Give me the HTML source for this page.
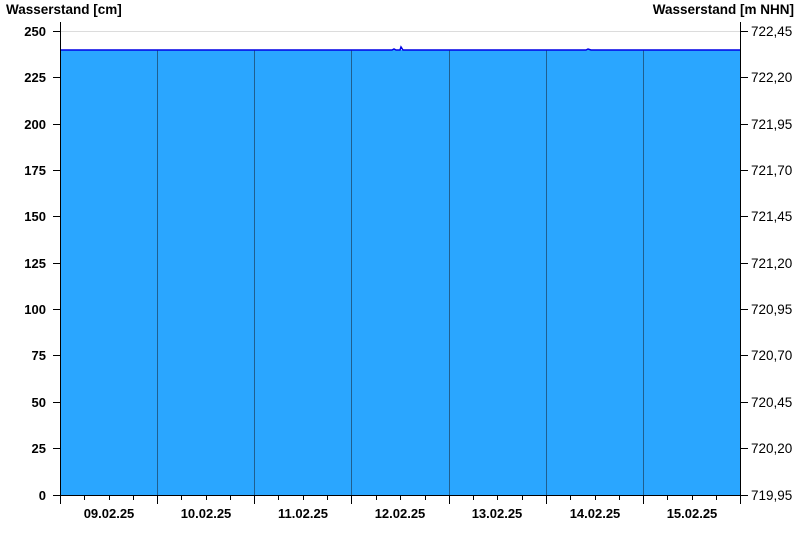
<!DOCTYPE html>
<html><head><style>body{margin:0;background:#fff}svg{display:block}</style></head><body>
<svg width="800" height="550" xmlns="http://www.w3.org/2000/svg" font-family="Liberation Sans, Arial, sans-serif" font-size="13">
<rect width="800" height="550" fill="#fff"/>
<line x1="60" y1="31.5" x2="740" y2="31.5" stroke="#dcdcdc"/>
<rect x="60" y="50" width="680" height="445" fill="#2aa6ff"/>
<g stroke="#1f5f8f" stroke-width="1">
<line x1="157.5" y1="50" x2="157.5" y2="495"/><line x1="254.5" y1="50" x2="254.5" y2="495"/><line x1="351.5" y1="50" x2="351.5" y2="495"/><line x1="449.5" y1="50" x2="449.5" y2="495"/><line x1="546.5" y1="50" x2="546.5" y2="495"/><line x1="643.5" y1="50" x2="643.5" y2="495"/>
</g>
<polyline points="60,50 392,50 394,49 396,50 400,50 401,47 403,50 586,50 588,49 591,50 740,50" fill="none" stroke="#0000e6" stroke-width="1.5"/>
<g stroke="#000" stroke-width="1">
<line x1="60.5" y1="22" x2="60.5" y2="495"/>
<line x1="740.5" y1="22" x2="740.5" y2="495"/>
<line x1="60" y1="495.5" x2="741" y2="495.5"/>
<line x1="53" y1="31.5" x2="60" y2="31.5"/><line x1="53" y1="77.5" x2="60" y2="77.5"/><line x1="53" y1="124.5" x2="60" y2="124.5"/><line x1="53" y1="170.5" x2="60" y2="170.5"/><line x1="53" y1="216.5" x2="60" y2="216.5"/><line x1="53" y1="263.5" x2="60" y2="263.5"/><line x1="53" y1="309.5" x2="60" y2="309.5"/><line x1="53" y1="355.5" x2="60" y2="355.5"/><line x1="53" y1="402.5" x2="60" y2="402.5"/><line x1="53" y1="448.5" x2="60" y2="448.5"/><line x1="53" y1="495.5" x2="60" y2="495.5"/>
<line x1="741" y1="31.5" x2="748" y2="31.5"/><line x1="741" y1="77.5" x2="748" y2="77.5"/><line x1="741" y1="124.5" x2="748" y2="124.5"/><line x1="741" y1="170.5" x2="748" y2="170.5"/><line x1="741" y1="216.5" x2="748" y2="216.5"/><line x1="741" y1="263.5" x2="748" y2="263.5"/><line x1="741" y1="309.5" x2="748" y2="309.5"/><line x1="741" y1="355.5" x2="748" y2="355.5"/><line x1="741" y1="402.5" x2="748" y2="402.5"/><line x1="741" y1="448.5" x2="748" y2="448.5"/><line x1="741" y1="495.5" x2="748" y2="495.5"/>
<line x1="60.5" y1="495" x2="60.5" y2="504"/><line x1="157.5" y1="495" x2="157.5" y2="504"/><line x1="254.5" y1="495" x2="254.5" y2="504"/><line x1="351.5" y1="495" x2="351.5" y2="504"/><line x1="449.5" y1="495" x2="449.5" y2="504"/><line x1="546.5" y1="495" x2="546.5" y2="504"/><line x1="643.5" y1="495" x2="643.5" y2="504"/><line x1="740.5" y1="495" x2="740.5" y2="504"/>
<line x1="84.5" y1="495" x2="84.5" y2="500"/><line x1="109.5" y1="495" x2="109.5" y2="500"/><line x1="133.5" y1="495" x2="133.5" y2="500"/>
<line x1="181.5" y1="495" x2="181.5" y2="500"/><line x1="206.5" y1="495" x2="206.5" y2="500"/><line x1="230.5" y1="495" x2="230.5" y2="500"/>
<line x1="278.5" y1="495" x2="278.5" y2="500"/><line x1="303.5" y1="495" x2="303.5" y2="500"/><line x1="327.5" y1="495" x2="327.5" y2="500"/>
<line x1="376.5" y1="495" x2="376.5" y2="500"/><line x1="400.5" y1="495" x2="400.5" y2="500"/><line x1="425.5" y1="495" x2="425.5" y2="500"/>
<line x1="473.5" y1="495" x2="473.5" y2="500"/><line x1="497.5" y1="495" x2="497.5" y2="500"/><line x1="522.5" y1="495" x2="522.5" y2="500"/>
<line x1="570.5" y1="495" x2="570.5" y2="500"/><line x1="595.5" y1="495" x2="595.5" y2="500"/><line x1="619.5" y1="495" x2="619.5" y2="500"/>
<line x1="667.5" y1="495" x2="667.5" y2="500"/><line x1="692.5" y1="495" x2="692.5" y2="500"/><line x1="716.5" y1="495" x2="716.5" y2="500"/>
</g>
<g font-weight="bold" fill="#000">
<text x="6" y="14" font-size="13.5">Wasserstand [cm]</text>
<text x="794" y="14" text-anchor="end" font-size="13.5">Wasserstand [m NHN]</text>
<g text-anchor="end">
<text x="46" y="36">250</text><text x="46" y="82">225</text><text x="46" y="129">200</text><text x="46" y="175">175</text><text x="46" y="221">150</text><text x="46" y="268">125</text><text x="46" y="314">100</text><text x="46" y="360">75</text><text x="46" y="407">50</text><text x="46" y="453">25</text><text x="46" y="500">0</text>
</g>
<g text-anchor="middle">
<text x="109" y="518">09.02.25</text><text x="206" y="518">10.02.25</text><text x="303" y="518">11.02.25</text><text x="400" y="518">12.02.25</text><text x="497" y="518">13.02.25</text><text x="595" y="518">14.02.25</text><text x="692" y="518">15.02.25</text>
</g>
</g>
<g fill="#000" font-size="13.5">
<text x="751" y="36">722,45</text><text x="751" y="82">722,20</text><text x="751" y="129">721,95</text><text x="751" y="175">721,70</text><text x="751" y="221">721,45</text><text x="751" y="268">721,20</text><text x="751" y="314">720,95</text><text x="751" y="360">720,70</text><text x="751" y="407">720,45</text><text x="751" y="453">720,20</text><text x="751" y="500">719,95</text>
</g>
</svg>
</body></html>
